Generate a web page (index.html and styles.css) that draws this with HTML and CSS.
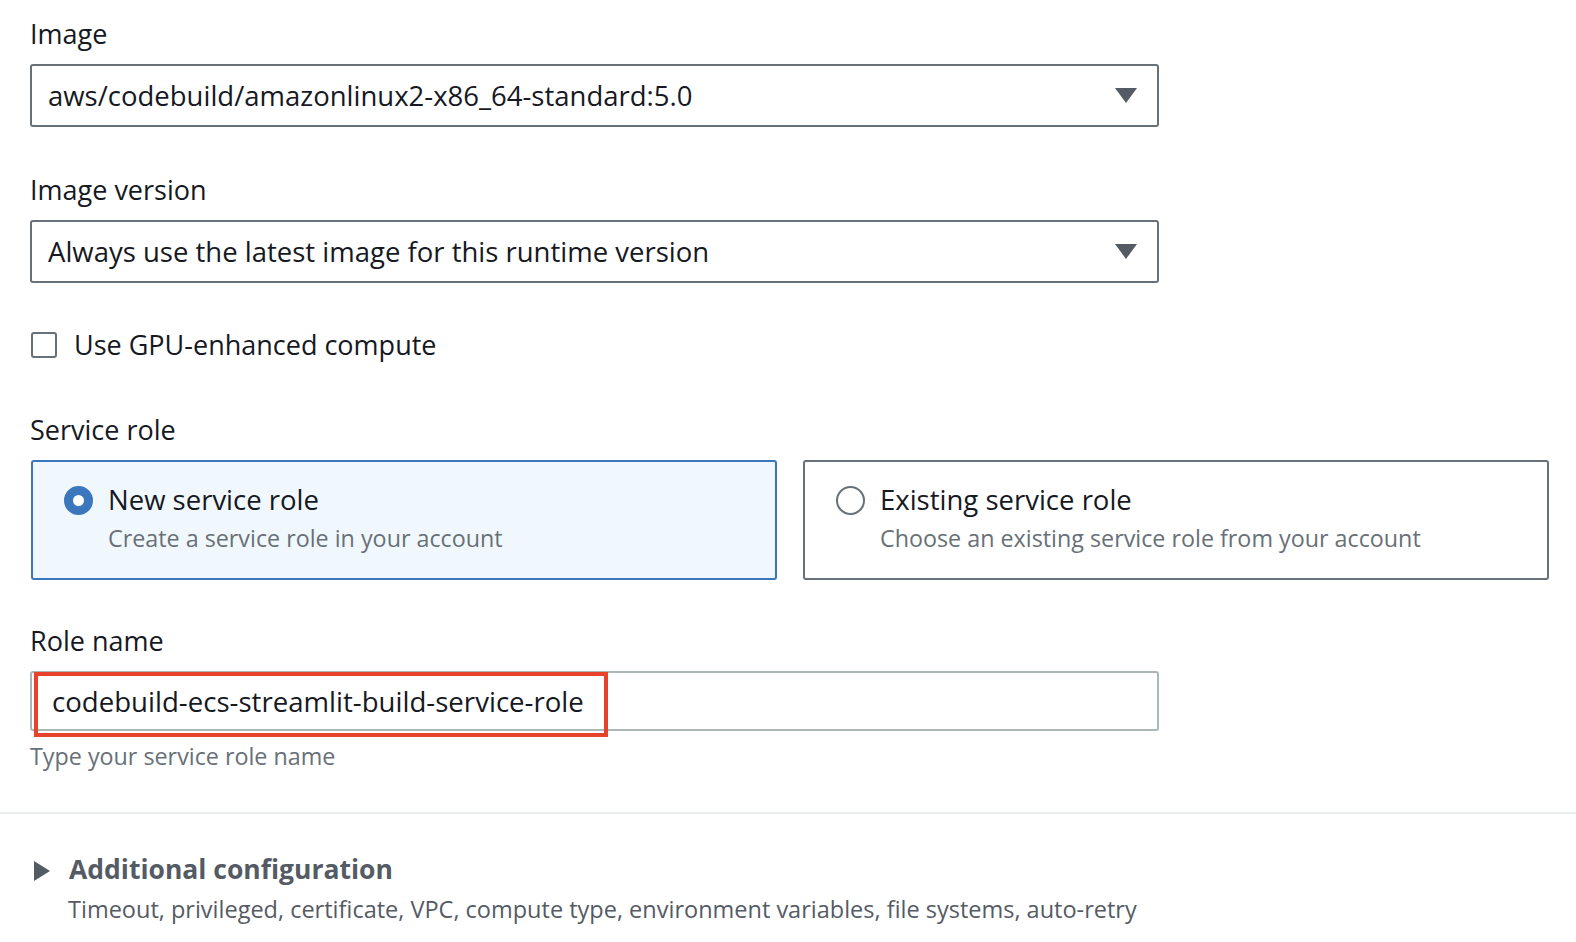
FILE: index.html
```html
<!DOCTYPE html>
<html lang="en">
<head>
<meta charset="utf-8">
<title>Environment</title>
<link rel="stylesheet" href="styles.css">
</head>
<body>
<div class="page">
  <div class="content">
    <div class="field">
      <div class="label">Image</div>
      <div class="select">
        <span class="select-value">aws/codebuild/amazonlinux2-x86_64-standard:5.0</span>
        <svg class="caret-down" width="22" height="16" viewBox="0 0 22 16"><path d="M0 0 H22 L11 15 Z" fill="#545b64"/></svg>
      </div>
    </div>

    <div class="field">
      <div class="label">Image version</div>
      <div class="select">
        <span class="select-value">Always use the latest image for this runtime version</span>
        <svg class="caret-down" width="22" height="16" viewBox="0 0 22 16"><path d="M0 0 H22 L11 15 Z" fill="#545b64"/></svg>
      </div>
    </div>

    <div class="checkbox-row">
      <span class="checkbox"></span>
      <span class="checkbox-label">Use GPU-enhanced compute</span>
    </div>

    <div class="field field-tiles">
      <div class="label">Service role</div>
      <div class="tiles">
        <div class="tile tile-selected">
          <span class="radio radio-checked"></span>
          <div class="tile-text">
            <div class="tile-title">New service role</div>
            <div class="tile-desc">Create a service role in your account</div>
          </div>
        </div>
        <div class="tile">
          <span class="radio"></span>
          <div class="tile-text">
            <div class="tile-title">Existing service role</div>
            <div class="tile-desc">Choose an existing service role from your account</div>
          </div>
        </div>
      </div>
    </div>

    <div class="field">
      <div class="label">Role name</div>
      <div class="input-wrap">
        <div class="input">codebuild-ecs-streamlit-build-service-role</div>
        <div class="highlight"></div>
      </div>
      <div class="help">Type your service role name</div>
    </div>
  </div>

  <div class="divider"></div>

  <div class="expander">
    <div class="expander-head">
      <svg class="caret-right" width="17" height="20" viewBox="0 0 17 20"><path d="M0 0 L16 10 L0 20 Z" fill="#545b64"/></svg>
      <span class="expander-title">Additional configuration</span>
    </div>
    <div class="expander-desc">Timeout, privileged, certificate, VPC, compute type, environment variables, file systems, auto-retry</div>
  </div>
</div>
</body>
</html>
```

FILE: styles.css
```css
* { box-sizing: border-box; }
html, body { margin: 0; padding: 0; background: #ffffff; }
body {
  font-family: "Open Sans", "Noto Sans", "Liberation Sans", sans-serif;
  color: #16191f;
}
.page { padding-top: 16px; }
.content { padding-left: 30px; padding-right: 27px; }

.field { margin-bottom: 45px; }
.field-tiles { margin-bottom: 43px; }
.label {
  font-size: 27px;
  line-height: 36px;
  margin-bottom: 12px;
  color: #16191f;
}

.select {
  width: 1129px;
  height: 63px;
  border: 2px solid #687078;
  border-radius: 3px;
  display: flex;
  align-items: center;
  justify-content: space-between;
  padding: 0 20px 0 16px;
}
.select-value { font-size: 27.5px; line-height: 36px; color: #16191f; }
.caret-down { display: block; }

.checkbox-row {
  display: flex;
  align-items: center;
  height: 36px;
  margin-top: -1px;
  margin-bottom: 49px;
}
.checkbox {
  width: 26px;
  height: 26px;
  border: 2px solid #687078;
  border-radius: 3px;
  margin-left: 1px;
  margin-right: 17px;
}
.checkbox-label { font-size: 27px; line-height: 36px; }

.tiles {
  display: grid;
  grid-template-columns: 746px 746px;
  column-gap: 26px;
  margin-left: 1px;
  margin-top: 1px;
}
.tile {
  height: 120px;
  border: 2px solid #687078;
  border-radius: 3px;
  display: flex;
  align-items: flex-start;
  padding: 20px 20px 0 31px;
}
.tile-selected {
  border-color: #3a77bd;
  background: #f1f8fd;
}
.radio {
  flex: none;
  width: 29px;
  height: 29px;
  border-radius: 50%;
  border: 2.5px solid #687078;
  background: #fff;
  margin-top: 4px;
  margin-right: 15px;
}
.radio-checked {
  border: 9px solid #3a77bd;
  background: #fff;
}
.tile-title { font-size: 27.5px; line-height: 36px; color: #16191f; }
.tile-desc { font-size: 23.3px; line-height: 36px; margin-top: 2px; color: #687078; }

.input-wrap { position: relative; width: 1129px; }
.input {
  height: 60px;
  border: 2px solid #aab7b8;
  border-radius: 3px;
  padding-left: 20px;
  display: flex;
  align-items: center;
  font-size: 27.6px;
  line-height: 36px;
  color: #16191f;
}
.highlight {
  position: absolute;
  left: 4px;
  top: 1px;
  width: 574px;
  height: 65px;
  border: 4px solid #e8412c;
}
.help {
  margin-top: 9px;
  font-size: 23.3px;
  line-height: 32px;
  color: #687078;
}
.field:last-child { margin-bottom: 0; }

.divider {
  margin-top: 40px;
  height: 2px;
  background: #eaeded;
}

.expander { padding-left: 34px; padding-top: 37px; }
.expander-head {
  display: flex;
  align-items: center;
  height: 36px;
}
.caret-right { display: block; margin-right: 18px; margin-top: 3px; }
.expander-title {
  font-size: 26.5px;
  line-height: 36px;
  font-weight: 700;
  color: #545b64;
}
.expander-desc {
  margin-top: 4px;
  padding-left: 34px;
  font-size: 23.5px;
  line-height: 36px;
  color: #545b64;
}
```
